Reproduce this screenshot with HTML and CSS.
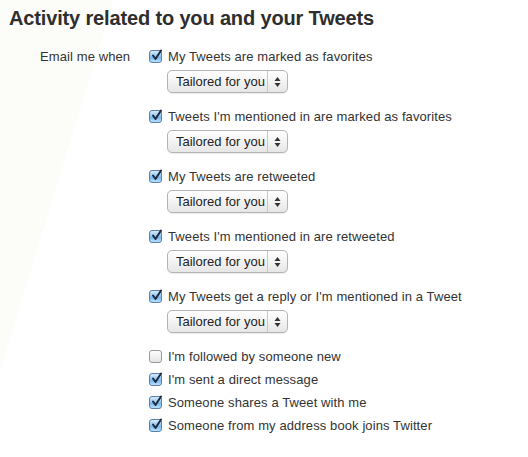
FILE: index.html
```html
<!DOCTYPE html>
<html>
<head>
<meta charset="utf-8">
<link rel="stylesheet" href="styles.css">
</head>
<body>
<div class="page">
  <h2 class="title">Activity related to you and your Tweets</h2>
  <div class="form-row">
    <div class="label">Email me when</div>
    <div class="options">
      <div class="group">
        <div class="check-row"><span class="cb on"><svg viewBox="0 0 13 13" width="13" height="13"><path d="M3 6.5 L5.5 10 L11 1.5" /></svg></span><span>My Tweets are marked as favorites</span></div>
        <div class="select"><span class="sel-text">Tailored for you</span><span class="sel-arrows"><svg viewBox="0 0 7 10" width="7" height="10"><path d="M3.5 0 L6.5 4 L0.5 4 Z M3.5 10 L6.5 6 L0.5 6 Z"/></svg></span></div>
      </div>
      <div class="group">
        <div class="check-row"><span class="cb on"><svg viewBox="0 0 13 13" width="13" height="13"><path d="M3 6.5 L5.5 10 L11 1.5" /></svg></span><span>Tweets I'm mentioned in are marked as favorites</span></div>
        <div class="select"><span class="sel-text">Tailored for you</span><span class="sel-arrows"><svg viewBox="0 0 7 10" width="7" height="10"><path d="M3.5 0 L6.5 4 L0.5 4 Z M3.5 10 L6.5 6 L0.5 6 Z"/></svg></span></div>
      </div>
      <div class="group">
        <div class="check-row"><span class="cb on"><svg viewBox="0 0 13 13" width="13" height="13"><path d="M3 6.5 L5.5 10 L11 1.5" /></svg></span><span>My Tweets are retweeted</span></div>
        <div class="select"><span class="sel-text">Tailored for you</span><span class="sel-arrows"><svg viewBox="0 0 7 10" width="7" height="10"><path d="M3.5 0 L6.5 4 L0.5 4 Z M3.5 10 L6.5 6 L0.5 6 Z"/></svg></span></div>
      </div>
      <div class="group">
        <div class="check-row"><span class="cb on"><svg viewBox="0 0 13 13" width="13" height="13"><path d="M3 6.5 L5.5 10 L11 1.5" /></svg></span><span>Tweets I'm mentioned in are retweeted</span></div>
        <div class="select"><span class="sel-text">Tailored for you</span><span class="sel-arrows"><svg viewBox="0 0 7 10" width="7" height="10"><path d="M3.5 0 L6.5 4 L0.5 4 Z M3.5 10 L6.5 6 L0.5 6 Z"/></svg></span></div>
      </div>
      <div class="group">
        <div class="check-row"><span class="cb on"><svg viewBox="0 0 13 13" width="13" height="13"><path d="M3 6.5 L5.5 10 L11 1.5" /></svg></span><span>My Tweets get a reply or I'm mentioned in a Tweet</span></div>
        <div class="select"><span class="sel-text">Tailored for you</span><span class="sel-arrows"><svg viewBox="0 0 7 10" width="7" height="10"><path d="M3.5 0 L6.5 4 L0.5 4 Z M3.5 10 L6.5 6 L0.5 6 Z"/></svg></span></div>
      </div>
      <div class="check-row"><span class="cb"></span><span>I'm followed by someone new</span></div>
      <div class="check-row"><span class="cb on"><svg viewBox="0 0 13 13" width="13" height="13"><path d="M3 6.5 L5.5 10 L11 1.5" /></svg></span><span>I'm sent a direct message</span></div>
      <div class="check-row"><span class="cb on"><svg viewBox="0 0 13 13" width="13" height="13"><path d="M3 6.5 L5.5 10 L11 1.5" /></svg></span><span>Someone shares a Tweet with me</span></div>
      <div class="check-row"><span class="cb on"><svg viewBox="0 0 13 13" width="13" height="13"><path d="M3 6.5 L5.5 10 L11 1.5" /></svg></span><span>Someone from my address book joins Twitter</span></div>
    </div>
  </div>
</div>
</body>
</html>
```

FILE: styles.css
```css
html, body {
  margin: 0;
  padding: 0;
}
body {
  width: 528px;
  height: 457px;
  overflow: hidden;
  font-family: "Liberation Sans", Arial, sans-serif;
  font-size: 13px;
  letter-spacing: 0.1px;
  color: #333;
  background: #fff linear-gradient(107deg, #fcfdf8 0, #fcfdf8 17%, #ffffff 17%) no-repeat;
}
.page {
  padding: 6px 0 0 9px;
}
.title {
  margin: 0;
  font-size: 20px;
  font-weight: bold;
  line-height: 24px;
  color: #2e2e2e;
  letter-spacing: -0.15px;
}
.form-row {
  display: flex;
  margin-top: 15px;
}
.label {
  width: 140px;
  flex: none;
  padding-left: 31px;
  box-sizing: border-box;
  line-height: 23px;
  white-space: nowrap;
  color: #333;
}
.options {
  display: flex;
  flex-direction: column;
}
.group {
  margin-bottom: 12px;
}
.check-row {
  display: flex;
  align-items: center;
  height: 23px;
  gap: 6px;
  white-space: nowrap;
}
.cb {
  width: 13px;
  height: 13px;
  flex: none;
  box-sizing: border-box;
  border: 1px solid #9a9a9a;
  border-radius: 3px;
  background: linear-gradient(#fdfdfd, #e4e4e4);
  display: inline-flex;
  position: relative;
}
.cb.on {
  border-color: #5a7fa8;
  background: linear-gradient(#d6ebfb, #8ec3ef 50%, #6fb1ea 51%, #b8e0fb);
}
.cb svg {
  position: absolute;
  left: 0;
  top: -2px;
  overflow: visible;
}
.cb path {
  fill: none;
  stroke: #1d2a40;
  stroke-width: 2;
  stroke-linecap: round;
  stroke-linejoin: round;
}
.select {
  margin-left: 18px;
  margin-top: 2px;
  width: 121px;
  height: 23px;
  box-sizing: border-box;
  border: 1px solid #b4b4b4;
  border-radius: 5px;
  background: linear-gradient(#ffffff, #f3f3f3 50%, #e6e6e6);
  display: flex;
  align-items: center;
  box-shadow: 0 1px 1px rgba(0,0,0,0.08);
  letter-spacing: 0;
}
.sel-text {
  padding-left: 8px;
  width: 100px;
  box-sizing: border-box;
  color: #222;
  border-right: 1px solid #c8c8c8;
  line-height: 21px;
}
.sel-arrows {
  flex: 1;
  display: flex;
  justify-content: center;
  align-items: center;
}
.sel-arrows path {
  fill: #333;
}
```
